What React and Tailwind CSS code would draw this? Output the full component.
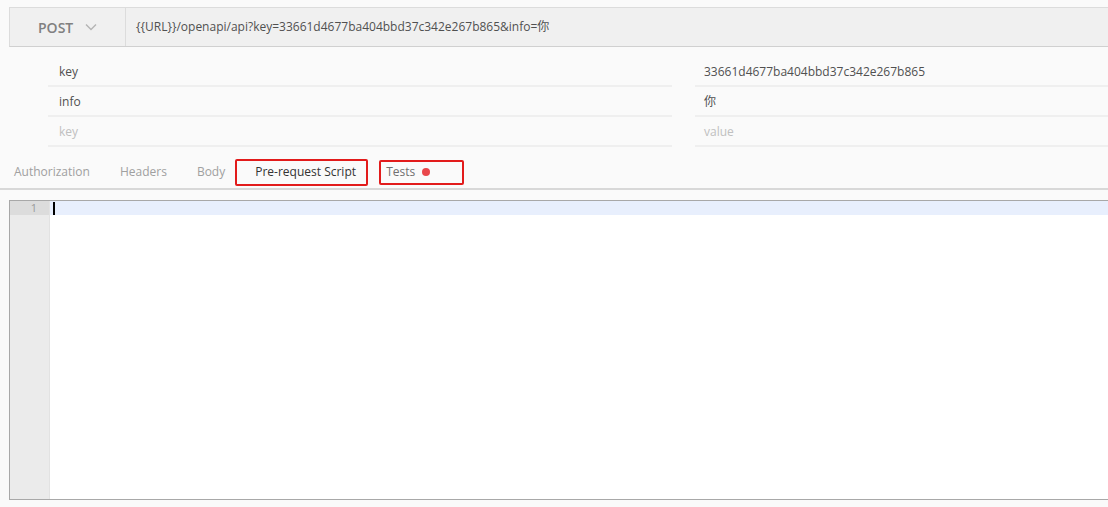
import React from 'react';

const PARAMS = [
  { k: 'key', v: '33661d4677ba404bbd37c342e267b865' },
  { k: 'info', v: '你' },
  { k: 'key', v: 'value', placeholder: true },
];

const TABS = ['Authorization', 'Headers', 'Body'];

const font = { fontFamily: '"Open Sans", "Noto Sans CJK SC", sans-serif' };

export default function App() {
  return (
    <div className="w-[1108px] h-[507px] bg-[#fafafa] overflow-hidden text-[12px]" style={font}>
      {/* url bar */}
      <div className="pt-[7px] pl-[9px]">
        <div className="flex h-[40px] bg-[#f0f0f0] border border-r-0 border-[#dcdcdc] border-b-[#d0d0d0]">
          <div className="w-[116px] flex items-center pl-[28px] gap-[12px] border-r border-[#dcdcdc]">
            <span className="text-[14px] font-semibold text-[#808080]">POST</span>
            <svg width="12" height="8" viewBox="0 0 12 8" fill="none" stroke="#b4b4b4" strokeWidth="1.4">
              <path d="M1 1.5l5 5 5-5" />
            </svg>
          </div>
          <div className="flex items-center pl-[10px] text-[#505050]">
            {'{{URL}}/openapi/api?key=33661d4677ba404bbd37c342e267b865&info=你'}
          </div>
        </div>
      </div>

      {/* params */}
      <div className="mt-[10px]">
        {PARAMS.map((p, i) => (
          <div key={i} className="flex h-[30px]">
            <div className="ml-[48px] w-[624px] flex items-center pl-[11px] pt-[2px] border-b-2 border-[#efefef]">
              <span className={p.placeholder ? 'text-[#c0c0c0]' : 'text-[#505050]'}>{p.k}</span>
            </div>
            <div className="ml-[23px] flex-1 flex items-center pl-[9px] pt-[2px] border-b-2 border-[#efefef]">
              <span className={p.placeholder ? 'text-[#c0c0c0]' : 'text-[#505050]'}>{p.v}</span>
            </div>
          </div>
        ))}
      </div>

      {/* tabs */}
      <div className="mt-[12px] h-[31px] flex items-start border-b-2 border-[#d8d8d8]">
        <div className="flex items-center h-[26px] text-[#a0a0a0]">
          {TABS.map((t) => (
            <span key={t} className={t === 'Authorization' ? 'pl-[14px] pr-[30px]' : t === 'Headers' ? 'pr-[30px]' : 'pr-[10px]'}>{t}</span>
          ))}
          <span className="h-[27px] w-[133px] flex items-center pl-[18px] border-2 border-[#e21b1b] rounded-[2px] text-[#333]">
            Pre-request Script
          </span>
          <span className="ml-[11px] h-[25px] w-[85px] flex items-center pl-[5px] gap-[7px] border-2 border-[#e21b1b] rounded-[2px] text-[#707070]">
            Tests
            <span className="w-[8px] h-[8px] rounded-full bg-[#e9474b]" />
          </span>
        </div>
      </div>

      {/* editor */}
      <div className="mt-[10px] ml-[9px] h-[300px] bg-white border border-r-0 border-[#a8a8a8] flex">
        <div className="w-[40px] bg-[#ebebeb] border-r border-[#e2e2e2] flex flex-col">
          <div className="h-[14px] bg-[#dcdcdc] flex items-center justify-end pr-[12px] text-[11px] text-[#999]">1</div>
        </div>
        <div className="flex-1">
          <div className="h-[14px] bg-[#e8effd] pl-[3px] flex items-center">
            <span className="w-[2px] h-[13px] bg-black" />
          </div>
        </div>
      </div>
    </div>
  );
}
